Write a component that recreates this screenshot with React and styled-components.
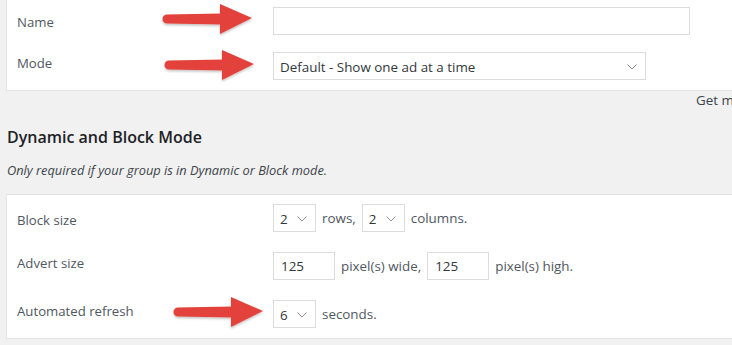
import styled, { createGlobalStyle } from "styled-components";

// Ajustes del grupo: nombre, modo y opciones de modo dinamico / bloque

const Global = createGlobalStyle`
  body {
    margin: 0;
    background: #f1f1f1;
    font-family: "Open Sans", "Noto Sans", sans-serif;
    color: #32373c;
    overflow: hidden;
  }
`;

const Arrow = ({ x, y, w = 90, h = 30 }) => (
  <ArrowSvg style={{ left: x, top: y }} width={w} height={h} viewBox="0 0 90 30">
    <defs>
      <filter id="sh" x="-10%" y="-20%" width="120%" height="150%">
        <feDropShadow dx="0" dy="1.5" stdDeviation="1" floodColor="#000" floodOpacity="0.25" />
      </filter>
    </defs>
    <g filter="url(#sh)" fill="#e2433a">
      <path d="M5 10.5 L60 9.5 L60 20.5 L5 19.5 A4.5 4.5 0 0 1 5 10.5 Z" />
      <path d="M58 0 L90 14 L58 30 Z" />
    </g>
  </ArrowSvg>
);

const Chevron = () => (
  <svg width="10" height="6" viewBox="0 0 10 6">
    <path d="M0.5 0.5 L5 5 L9.5 0.5" fill="none" stroke="#8c8f94" strokeWidth="1" />
  </svg>
);

const Select = ({ value, width }) => (
  <SelectBox style={{ width }}>
    <span>{value}</span>
    <Chevron />
  </SelectBox>
);

const App = () => {
  return (
    <Page>
      <Global />

      <Card $cut>
        <Form>
          <Row>
            <Label $shift={1}>Name</Label>
            <Field><TextInput style={{ width: 417 }} /></Field>
          </Row>
          <Row>
            <Label $shift={-7}>Mode</Label>
            <Field><Select value="Default - Show one ad at a time" width={373} /></Field>
          </Row>
        </Form>
      </Card>

      <Note>Get mo</Note>

      <Heading>Dynamic and Block Mode</Heading>
      <Description>Only required if your group is in Dynamic or Block mode.</Description>

      <Card>
        <Form $wide>
          <Row>
            <Label $shift={4}>Block size</Label>
            <Field>
              <Select value="2" width={43} />
              <span>rows,</span>
              <Select value="2" width={43} />
              <span>columns.</span>
            </Field>
          </Row>
          <Row>
            <Label $shift={-7}>Advert size</Label>
            <Field>
              <TextInput style={{ width: 62 }} value="125" readOnly />
              <span>pixel(s) wide,</span>
              <TextInput style={{ width: 62 }} value="125" readOnly />
              <span>pixel(s) high.</span>
            </Field>
          </Row>
          <Row>
            <Label $shift={-7}>Automated refresh</Label>
            <Field>
              <Select value="6" width={43} />
              <span>seconds.</span>
            </Field>
          </Row>
        </Form>
      </Card>

      <Arrow x={162} y={4} />
      <Arrow x={164} y={50} />
      <Arrow x={173} y={297} />
    </Page>
  );
};

export default App;

const Page = styled.div`
  position: relative;
  padding-left: 6px;
  width: 800px;
`;

const ArrowSvg = styled.svg`
  position: absolute;
  overflow: visible;
`;

const Card = styled.div`
  background: #fff;
  border: 1px solid #e2e4e7;
  border-top: ${(p) => (p.$cut ? "none" : "1px solid #e2e4e7")};
  width: 780px;
`;

const Form = styled.div`
  display: flex;
  flex-direction: column;
  gap: ${(p) => (p.$wide ? "20px" : "17px")};
  padding: ${(p) => (p.$wide ? "9px 0 10px 10px" : "7px 0 10px 10px")};
`;

const Row = styled.div`
  display: grid;
  grid-template-columns: 256px 1fr;
  align-items: center;
  height: 28px;
`;

const Label = styled.div`
  font-size: 13.2px;
  color: #50575e;
  margin-top: ${(p) => p.$shift || 0}px;
`;

const Field = styled.div`
  display: flex;
  align-items: center;
  gap: 6px;
  font-size: 13.4px;
  color: #50575e;
`;

const TextInput = styled.input`
  box-sizing: border-box;
  height: 28px;
  border: 1px solid #dcdcde;
  border-radius: 0;
  padding: 0 7px;
  font: 13.4px "Open Sans", "Noto Sans", sans-serif;
  color: #32373c;
  background: #fff;
  outline: none;
`;

const SelectBox = styled.div`
  box-sizing: border-box;
  height: 28px;
  border: 1px solid #dcdcde;
  display: flex;
  align-items: center;
  justify-content: space-between;
  padding: 2px 8px 0 6px;
  font-size: 13.4px;
  color: #32373c;
  background: #fff;
`;

const Note = styled.div`
  margin: 0 0 0 690px;
  font-size: 13.4px;
  color: #3c434a;
  white-space: nowrap;
`;

const Heading = styled.h2`
  margin: 17px 0 0 1px;
  font-size: 16px;
  font-weight: 600;
  color: #1d2327;
`;

const Description = styled.p`
  margin: 13px 0 15px 1px;
  font-size: 12.8px;
  font-style: italic;
  color: #3c434a;
`;
